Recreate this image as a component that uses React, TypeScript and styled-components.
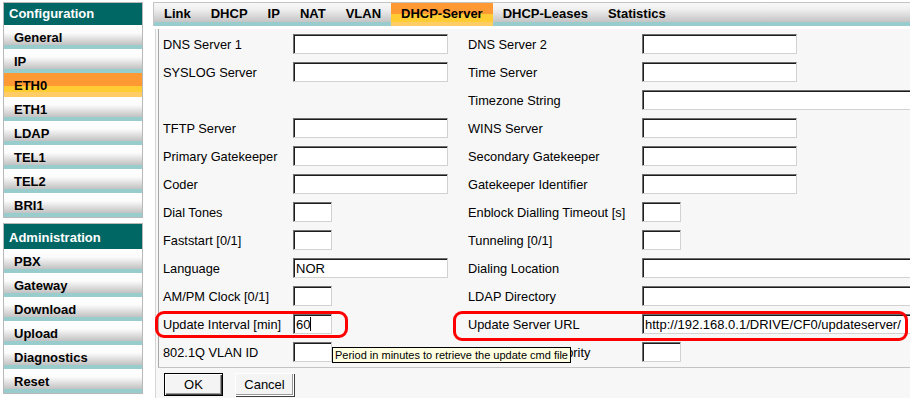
import React from "react";
import styled, { createGlobalStyle } from "styled-components";

const GlobalStyle = createGlobalStyle`
  html, body {
    margin: 0;
    padding: 0;
    background: #ffffff;
    overflow: hidden;
  }
  body {
    font-family: "Liberation Sans", Arial, sans-serif;
  }
`;

const Page = styled.div`
  display: flex;
  align-items: flex-start;
  width: 910px;
  height: 398px;
  overflow: hidden;
`;

// ---- left navigation ----
const Sidebar = styled.nav`
  flex-shrink: 0;
  width: 140px;
  margin: 2px 0 0 3px;
  display: flex;
  flex-direction: column;
  gap: 5px;
`;

const NavGroup = styled.div`
  border: 1px solid #b8b8b8;
  background: #ffffff;
`;

const NavHeader = styled.div<{ $height: number }>`
  height: ${(p) => p.$height}px;
  padding: ${(p) => p.$height - 22}px 0 0 5px;
  box-sizing: border-box;
  background: #016765;
  color: #ffffff;
  font: bold 13px "Liberation Sans", Arial, sans-serif;
  line-height: 22px;
`;

const NavItem = styled.div<{ $active?: boolean }>`
  height: 24px;
  box-sizing: border-box;
  padding: 3px 0 0 10px;
  font: bold 13px "Liberation Sans", Arial, sans-serif;
  line-height: 20px;
  color: #000000;
  background: ${(p) =>
    p.$active
      ? "linear-gradient(#ff9933 0, #ff9933 13px, #ffcc33 13px, #ffcc33 19px, #ffcc66 19px)"
      : "linear-gradient(#ffffff 0, #fbfbfb 8px, #c2c2c2 20px, #99cccc 20px, #99cccc 24px)"};
`;

// ---- tabs ----
const Main = styled.main`
  flex: 1;
  min-width: 0;
  margin: 2px 0 0 10px;
  display: flex;
  flex-direction: column;
`;

const TabBar = styled.div`
  display: flex;
  height: 23px;
  border-top: 1px solid #c4c4c4;
  border-left: 1px solid #c4c4c4;
  background: linear-gradient(#f8f8f8 0, #f0f0f0 6px, #c4c4c4 19px, #99cccc 19px, #99cccc 23px);
`;

const Tab = styled.div<{ $active?: boolean }>`
  padding: 0 10px;
  height: 23px;
  font: bold 13px "Liberation Sans", Arial, sans-serif;
  line-height: 22px;
  color: #000000;
  white-space: nowrap;
  background: ${(p) =>
    p.$active
      ? "linear-gradient(#ff9933 0, #ff9933 11px, #ffcc33 11px, #ffcc33 19px, #ffcc66 19px)"
      : "transparent"};
`;

// ---- form panel ----
const Panel = styled.section`
  margin: 3px 0 0 2px;
  padding-left: 2px;
  border-left: 1px solid #d6d6d6;
  background: #f7f7f7;
  height: 400px;
`;

const FormTable = styled.div`
  border-left: 1px solid #a8a8a8;
  border-bottom: 1px solid #c4c4c4;
  padding: 1px 0 1px 0;
`;

const Row = styled.div`
  position: relative;
  display: grid;
  grid-template-columns: 130px 175px 174px 1fr;
  align-items: center;
  height: 28px;
  padding-left: 4px;
`;

const Label = styled.span`
  font: 12.8px "Liberation Sans", Arial, sans-serif;
  color: #000000;
  white-space: nowrap;
`;

const Cell = styled.div`
  position: relative;
  display: flex;
  align-items: center;
  min-width: 0;
`;

type BoxSize = "small" | "medium" | "wide";
const boxWidth: Record<BoxSize, number> = { small: 39, medium: 155, wide: 290 };

const TextBox = styled.input<{ $size: BoxSize }>`
  box-sizing: border-box;
  flex-shrink: 0;
  width: ${(p) => boxWidth[p.$size]}px;
  height: 20px;
  margin: 0;
  padding: 0 0 0 2px;
  border: 1px solid;
  border-color: #6e6e6e #d2d2d2 #d2d2d2 #6e6e6e;
  box-shadow: inset 1px 1px 0 #1c1c1c;
  background: #ffffff;
  font: 13px "Liberation Sans", Arial, sans-serif;
  color: #000000;
  outline: none;
`;

const Caret = styled.span<{ $at: number }>`
  position: absolute;
  left: ${(p) => p.$at}px;
  top: 3px;
  width: 1px;
  height: 14px;
  background: #000000;
`;

// red annotation ring drawn over a row
const Ring = styled.span<{ $left: number; $width: number; $height: number }>`
  position: absolute;
  left: ${(p) => p.$left}px;
  top: 1px;
  width: ${(p) => p.$width}px;
  height: ${(p) => p.$height}px;
  box-sizing: border-box;
  border: 3px solid #ff0000;
  border-radius: 9px;
  pointer-events: none;
  z-index: 1;
`;

const Tooltip = styled.div`
  position: absolute;
  left: 173px;
  top: 9px;
  height: 16px;
  box-sizing: border-box;
  padding: 0 2px;
  border: 1px solid #000000;
  background: #ffffe1;
  font: 11px "Liberation Sans", Arial, sans-serif;
  line-height: 14px;
  color: #000000;
  white-space: nowrap;
  z-index: 2;
`;

const Actions = styled.div`
  display: flex;
  gap: 12px;
  padding: 5px 0 0 6px;
`;

const Button = styled.button<{ $default?: boolean }>`
  width: 59px;
  height: 23px;
  padding: 0;
  margin: 0;
  box-sizing: border-box;
  background: #f4f4f4;
  font: 13px "Liberation Sans", Arial, sans-serif;
  color: #000000;
  border: 1px solid ${(p) => (p.$default ? "#000000" : "#ffffff")};
  box-shadow: ${(p) =>
    p.$default
      ? "inset 1px 1px 0 #ffffff, inset -1px -1px 0 #404040, inset -2px -2px 0 #9a9a9a"
      : "inset -1px -1px 0 #9a9a9a, 1px 1px 0 #404040"};
`;

type Field = {
  label: string;
  size: BoxSize;
  value?: string;
} | null;

const rows: [Field, Field][] = [
  [{ label: "DNS Server 1", size: "medium" }, { label: "DNS Server 2", size: "medium" }],
  [{ label: "SYSLOG Server", size: "medium" }, { label: "Time Server", size: "medium" }],
  [null, { label: "Timezone String", size: "wide" }],
  [{ label: "TFTP Server", size: "medium" }, { label: "WINS Server", size: "medium" }],
  [{ label: "Primary Gatekeeper", size: "medium" }, { label: "Secondary Gatekeeper", size: "medium" }],
  [{ label: "Coder", size: "medium" }, { label: "Gatekeeper Identifier", size: "medium" }],
  [{ label: "Dial Tones", size: "small" }, { label: "Enblock Dialling Timeout [s]", size: "small" }],
  [{ label: "Faststart [0/1]", size: "small" }, { label: "Tunneling [0/1]", size: "small" }],
  [{ label: "Language", size: "medium", value: "NOR" }, { label: "Dialing Location", size: "wide" }],
  [{ label: "AM/PM Clock [0/1]", size: "small" }, { label: "LDAP Directory", size: "wide" }],
  [
    { label: "Update Interval [min]", size: "small", value: "60" },
    { label: "Update Server URL", size: "wide", value: "http://192.168.0.1/DRIVE/CF0/updateserver/" },
  ],
  [{ label: "802.1Q VLAN ID", size: "small" }, { label: "802.1Q VLAN Priority", size: "small" }],
];

const configItems = ["General", "IP", "ETH0", "ETH1", "LDAP", "TEL1", "TEL2", "BRI1"];
const adminItems = ["PBX", "Gateway", "Download", "Upload", "Diagnostics", "Reset"];
const tabs = ["Link", "DHCP", "IP", "NAT", "VLAN", "DHCP-Server", "DHCP-Leases", "Statistics"];

function FieldCells({ field, caret }: { field: Field; caret?: boolean }) {
  if (!field) return (
    <>
      <span />
      <span />
    </>
  );
  return (
    <>
      <Label>{field.label}</Label>
      <Cell>
        <TextBox $size={field.size} value={field.value ?? ""} readOnly />
        {caret && <Caret $at={17} />}
      </Cell>
    </>
  );
}

export default function App() {
  return (
    <>
      <GlobalStyle />
      <Page>
        <Sidebar>
          <NavGroup>
            <NavHeader $height={22}>Configuration</NavHeader>
            {configItems.map((item) => (
              <NavItem key={item} $active={item === "ETH0"}>
                {item}
              </NavItem>
            ))}
          </NavGroup>
          <NavGroup>
            <NavHeader $height={25}>Administration</NavHeader>
            {adminItems.map((item) => (
              <NavItem key={item}>{item}</NavItem>
            ))}
          </NavGroup>
        </Sidebar>

        <Main>
          <TabBar>
            {tabs.map((t) => (
              <Tab key={t} $active={t === "DHCP-Server"}>
                {t}
              </Tab>
            ))}
          </TabBar>
          <Panel>
            <FormTable>
              {rows.map(([left, right], i) => (
                <Row key={i}>
                  <FieldCells field={left} caret={i === 10} />
                  <FieldCells field={right} />
                  {i === 10 && (
                    <>
                      <Ring $left={-4} $width={193} $height={27} />
                      <Ring $left={294} $width={455} $height={30} />
                    </>
                  )}
                  {i === 11 && <Tooltip>Period in minutes to retrieve the update cmd file</Tooltip>}
                </Row>
              ))}
            </FormTable>
            <Actions>
              <Button $default>OK</Button>
              <Button>Cancel</Button>
            </Actions>
          </Panel>
        </Main>
      </Page>
    </>
  );
}
